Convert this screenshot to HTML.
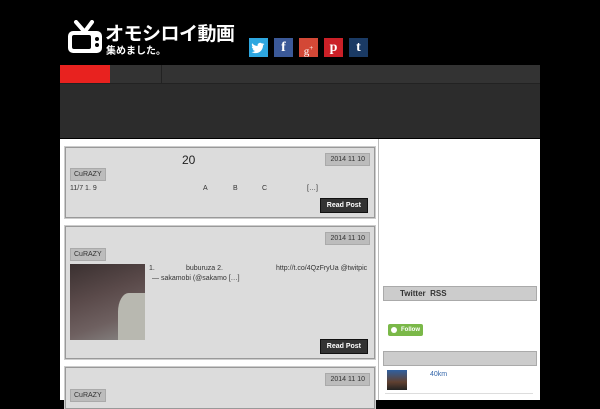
<!DOCTYPE html><html><head><meta charset="utf-8"><style>
body{margin:0;width:600px;height:400px;overflow:hidden;background:#000;font-family:"Liberation Sans","Noto Sans CJK JP",sans-serif;position:relative}
.a{position:absolute}
.card{position:absolute;left:65px;width:308px;background:#dcdcdc;border:1px solid #999;box-shadow:0 0 0 1px #ccc}
.tag{position:absolute;background:#bcbcbc;color:#333;font-size:7px;padding:2px 3px;border:1px solid #aaa}
.date{position:absolute;right:4px;background:#bcbcbc;color:#333;font-size:7px;padding:2px 4px;border:1px solid #aaa}
.btn{position:absolute;right:6px;background:#333;color:#fff;font-size:7px;font-weight:bold;padding:3px 6px;border:1px solid #111}
.t{font-size:7px;color:#333;position:absolute;white-space:nowrap}
.sb{width:19px;height:19px;color:#fff;font-weight:bold;font-size:14px;text-align:center;line-height:20px;top:38px}
</style></head><body>
<svg class="a" style="left:66px;top:20px" width="38" height="34" viewBox="0 0 38 34"><path d="M10 2 L17 10 M26 2 L20 10" stroke="#fff" stroke-width="4" stroke-linecap="round"/><rect x="2" y="11" width="34" height="22" rx="5" fill="#fff"/><rect x="6" y="15" width="19" height="14" rx="2" fill="#000"/><circle cx="31" cy="19" r="2" fill="#000"/><circle cx="31" cy="25" r="2" fill="#000"/></svg>
<div class="a" style="left:105px;top:19px;color:#fff;font-size:19px;font-weight:bold;letter-spacing:-0.5px">オモシロイ動画</div>
<div class="a" style="left:106px;top:42px;color:#fff;font-size:10px;font-weight:bold">集めました。</div>
<div class="a sb" style="left:249px;background:#2ea7e0"><svg width="19" height="19" viewBox="0 0 19 19"><path d="M15 6c-.5.2-1 .4-1.5.4.6-.3 1-.8 1.2-1.4-.5.3-1.1.5-1.7.6A2.6 2.6 0 0 0 8.6 8C6.4 7.9 4.5 6.9 3.2 5.3c-.7 1.2-.3 2.7.8 3.5-.4 0-.8-.1-1.2-.3 0 1.3.9 2.4 2.1 2.6-.4.1-.8.1-1.2 0 .3 1.1 1.3 1.8 2.5 1.8A5.3 5.3 0 0 1 2.5 14c1.2.7 2.5 1.1 4 1.1 4.9 0 7.6-4.1 7.5-7.7.5-.4 1-.8 1.3-1.3z" fill="#fff"/></svg></div>
<div class="a sb" style="left:274px;background:#3b5998;font-family:'Liberation Serif'">f</div>
<div class="a sb" style="left:299px;background:#d34836;font-size:11px;font-family:'Liberation Serif';font-weight:normal">g<sup style="font-size:7px">+</sup></div>
<div class="a sb" style="left:324px;background:#cb2027;font-family:'Liberation Serif'">p</div>
<div class="a sb" style="left:349px;background:#1a3a64;font-family:'Liberation Serif'">t</div>
<div class="a" style="left:60px;top:65px;width:480px;height:18px;background:#333;border-bottom:1px solid #222"></div>
<div class="a" style="left:60px;top:65px;width:50px;height:18px;background:#e8221f"></div>
<div class="a" style="left:161px;top:65px;width:1px;height:18px;background:#222"></div>
<div class="a" style="left:60px;top:84px;width:480px;height:54px;background:#2c2c2c"></div>
<div class="a" style="left:60px;top:139px;width:480px;height:261px;background:#fff"></div>
<div class="a" style="left:378px;top:139px;width:1px;height:261px;background:#bbb"></div>
<div class="card" style="top:147px;height:69px">
<div class="a" style="left:116px;top:5px;font-size:12px;color:#222">20</div>
<div class="date" style="top:5px">2014 11 10</div>
<div class="tag" style="left:4px;top:20px">CuRAZY</div>
<div class="t" style="left:4px;top:37px">11/7 1. 9</div>
<div class="t" style="left:137px;top:37px">A</div><div class="t" style="left:167px;top:37px">B</div><div class="t" style="left:196px;top:37px">C</div><div class="t" style="left:241px;top:37px">[…]</div>
<div class="btn" style="top:50px">Read Post</div></div>
<div class="card" style="top:226px;height:131px">
<div class="date" style="top:5px">2014 11 10</div>
<div class="tag" style="left:4px;top:21px">CuRAZY</div>
<div class="a" style="left:4px;top:37px;width:75px;height:76px;background:linear-gradient(160deg,#3a3030 0%,#5a4a4a 40%,#6e6060 70%,#8a8a88 100%)"></div>
<div class="a" style="left:52px;top:66px;width:27px;height:47px;background:#b8b8b0;border-radius:40% 0 0 0"></div>
<div class="t" style="left:83px;top:38px">1.</div><div class="t" style="left:120px;top:38px">buburuza 2.</div><div class="t" style="left:210px;top:38px">http://t.co/4QzFryUa @twitpic</div>
<div class="t" style="left:86px;top:48px">— sakamobi (@sakamo […]</div>
<div class="btn" style="top:112px">Read Post</div></div>
<div class="card" style="top:367px;height:40px">
<div class="date" style="top:5px">2014 11 10</div>
<div class="tag" style="left:4px;top:21px">CuRAZY</div></div>
<div class="a" style="left:383px;top:286px;width:152px;height:13px;background:#ccc;border:1px solid #aaa;font-size:8px;font-weight:bold;color:#333;line-height:13px;text-indent:16px">Twitter&nbsp; RSS</div>
<div class="a" style="left:388px;top:324px;width:35px;height:12px;background:#7ab848;border-radius:2px;color:#fff;font-size:6px;font-weight:bold;line-height:12px;text-indent:13px">Follow<span class="a" style="left:3px;top:3px;width:6px;height:6px;border-radius:50%;background:#fff;text-indent:0"></span></div>
<div class="a" style="left:383px;top:351px;width:152px;height:13px;background:#ccc;border:1px solid #aaa"></div>
<div class="a" style="left:387px;top:370px;width:20px;height:20px;background:linear-gradient(#3060a0,#604030 60%,#222)"></div>
<div class="a" style="left:430px;top:371px;font-size:7px;color:#36a">40km</div>
<div class="a" style="left:385px;top:393px;width:148px;height:1px;background:#ddd"></div>
</body></html>
